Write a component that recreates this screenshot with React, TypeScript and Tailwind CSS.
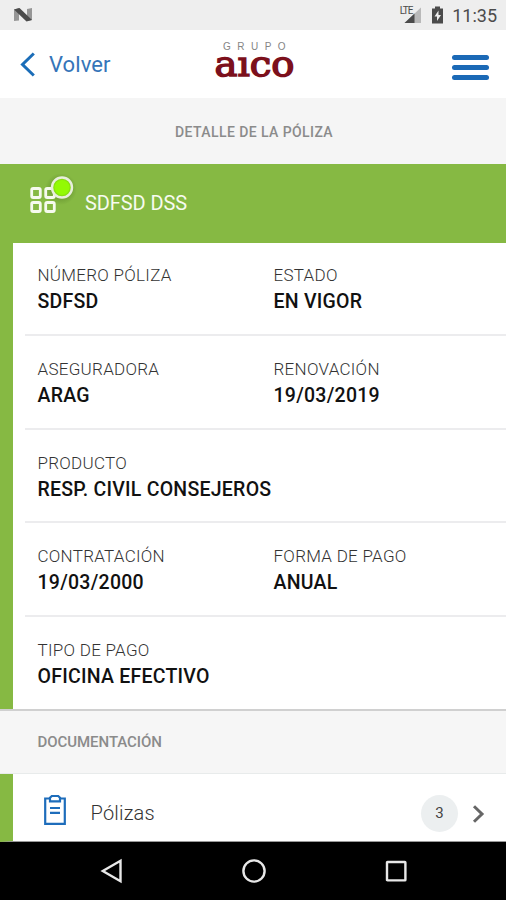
import React from "react";

type FieldData = { label: string; value: string };

const rows: FieldData[][] = [
  [
    { label: "NÚMERO PÓLIZA", value: "SDFSD" },
    { label: "ESTADO", value: "EN VIGOR" },
  ],
  [
    { label: "ASEGURADORA", value: "ARAG" },
    { label: "RENOVACIÓN", value: "19/03/2019" },
  ],
  [{ label: "PRODUCTO", value: "RESP. CIVIL CONSEJEROS" }],
  [
    { label: "CONTRATACIÓN", value: "19/03/2000" },
    { label: "FORMA DE PAGO", value: "ANUAL" },
  ],
  [{ label: "TIPO DE PAGO", value: "OFICINA EFECTIVO" }],
];

function Field({ label, value }: FieldData) {
  return (
    <div className="w-[236px] shrink-0 whitespace-nowrap">
      <div className="text-[17px] leading-[26px] font-light tracking-[0.28px] text-[#333]">{label}</div>
      <div className="text-[19.500px] leading-[28px] font-medium tracking-[0.25px] text-[#111]">{value}</div>
    </div>
  );
}

function StatusBar() {
  return (
    <div className="flex h-[30px] items-center bg-[#eeeeee] pr-[9px] pl-[13px]">
      <svg width="20" height="16" viewBox="0 0 20 16">
        <path d="M1 2.500L6 1v12.500L1 14zM14 2l5-1v12l-5 1z" fill="#969696" />
        <path d="M1 2.500L6.500 1L19 13l-5.500 1.500z" fill="#4b4b4b" />
      </svg>
      <div className="ml-auto flex items-center">
        <div className="relative h-[18px] w-[24px]">
          <svg className="absolute inset-0" width="24" height="18" viewBox="0 0 24 18">
            <path d="M23 1.500V17H6.500z" fill="#b9b9b9" />
            <path d="M16.500 7.500V17H6.500z" fill="#4b4b4b" />
          </svg>
          <span className="absolute top-0 left-[1.500px] text-[10px] leading-[9px] tracking-[-1px] text-[#4b4b4b]">LTE</span>
        </div>
        <svg className="ml-[9px]" width="13" height="18" viewBox="0 0 13 18">
          <path d="M4 0.500h5v2h3v15H1v-15h3z" fill="#4b4b4b" />
          <path d="M7.500 4.500L3.500 10.500H6v4.500l4-6H7.500z" fill="#eee" />
        </svg>
        <span className="mt-[2px] ml-[8px] text-[18px] leading-[20px] text-[#4b4b4b]">11:35</span>
      </div>
    </div>
  );
}

function Header() {
  return (
    <header className="flex h-[68px] items-start justify-between bg-white pr-[17px] pl-[20px]">
      <div className="flex w-[180px] items-center pt-[20px]">
        <svg width="16" height="28" viewBox="0 0 16 28" fill="none" stroke="#1b6db8" strokeWidth="3">
          <path d="M13.800 2.500L2.500 13.500l11.300 11" />
        </svg>
        <span className="mt-[1px] ml-[13px] text-[22px] leading-[28px] tracking-[0.1px] text-[#3575b9]">Volver</span>
      </div>
      <div className="flex w-[108px] flex-col items-center pt-[11px]">
        <span className="pl-[6px] font-['Liberation_Sans',sans-serif] text-[10px] leading-[11px] tracking-[6.500px] text-[#858585]">GRUPO</span>
        <svg className="overflow-visible" width="84" height="32" viewBox="0 0 84 32">
          <text x="1.500" y="23.500" textLength="80" lengthAdjust="spacingAndGlyphs" fontFamily="DejaVu Serif, serif" fontSize="36" fill="#7c101c" stroke="#7c101c" strokeWidth="1.500">aıco</text>
        </svg>
      </div>
      <div className="flex w-[180px] justify-end pt-[24.500px]">
        <div className="flex w-[37px] flex-col gap-[5px]">
          <div className="h-[5px] rounded-full bg-[#1b69b6]" />
          <div className="h-[5px] rounded-full bg-[#1b69b6]" />
          <div className="h-[5px] rounded-full bg-[#1b69b6]" />
        </div>
      </div>
    </header>
  );
}

export default function App() {
  return (
    <div className="flex h-[900px] w-[506px] flex-col overflow-hidden bg-white font-['Roboto',sans-serif]">
      <StatusBar />
      <Header />
      <div className="flex h-[66px] items-center justify-center bg-[#f5f5f5] pt-[2px] pl-[2px] text-[14px] font-medium tracking-[0.42px] text-[#8b8b8b]">
        DETALLE DE LA PÓLIZA
      </div>
      <div className="flex h-[79px] items-start bg-[#86b943] pt-[10px] pl-[27px]">
        <svg width="50" height="42" viewBox="0 0 50 42" fill="none">
          <defs>
            <radialGradient id="shade">
              <stop offset="0.600" stopColor="#5f8a2b" stopOpacity="0.500" />
              <stop offset="1" stopColor="#5f8a2b" stopOpacity="0" />
            </radialGradient>
          </defs>
          <circle cx="34" cy="15" r="16" fill="url(#shade)" />
          <g stroke="#f6faee" strokeWidth="2.800">
            <rect x="4.700" y="14.500" width="8.600" height="9" rx="1.500" />
            <rect x="18.700" y="14.500" width="8.600" height="9" rx="1.500" />
            <rect x="4.700" y="28.500" width="8.600" height="9" rx="1.500" />
            <rect x="18.700" y="28.500" width="8.600" height="9" rx="1.500" />
          </g>
          <circle cx="35" cy="13.500" r="10" fill="#87e010" stroke="#e8eedc" strokeWidth="2.400" />
          <circle cx="35" cy="13.500" r="7.500" fill="#93fa04" />
        </svg>
        <span className="mt-[17px] ml-[8px] text-[20px] leading-[24px] tracking-[-0.1px] text-[#f7fbf0]">SDFSD DSS</span>
      </div>
      <main className="h-[465.500px] border-l-[13px] border-[#86b943] bg-white pl-[12px]">
        {rows.map((fields, i) => (
          <div
            key={i}
            className="flex h-[93.600px] border-b-2 border-[#ececee] pt-[20px] pl-[12.500px] first:h-[93px] first:pt-[19px] last:border-b-0"
          >
            {fields.map((f) => (
              <Field key={f.label} {...f} />
            ))}
          </div>
        ))}
      </main>
      <div className="flex h-[65px] items-center border-t-[2.500px] border-b border-t-[#d0d0d0] border-b-[#e8ebeb] bg-[#f6f6f6] pt-[2px] pl-[37.500px] text-[15px] font-medium tracking-[-0.05px] text-[#8b8b8b]">
        DOCUMENTACIÓN
      </div>
      <div className="flex h-[68.500px] items-center border-b border-l-[13px] border-b-[#999] border-l-[#86b943] bg-white pr-[21px]">
        <svg className="mt-[6px] ml-[30px]" width="24" height="32" viewBox="0 0 24 32" fill="none" stroke="#1e6dbb" strokeWidth="2.200">
          <path d="M6.500 4.500H2.200v25.300h19.600V4.500h-4.300" />
          <path d="M7 7.300V3.800l1.800-1.800h6.400L17 3.800v3.500z" />
          <path d="M7 14h10M7 18.800h10" />
        </svg>
        <span className="mt-[12px] ml-[23.500px] text-[20px] leading-[24px] font-light tracking-[0.2px] text-[#333]">Pólizas</span>
        <div className="mt-[12px] ml-auto flex size-[37px] items-center justify-center rounded-full bg-[#eceff0] text-[15px] text-[#444]">3</div>
        <svg className="mt-[13px] ml-[14px]" width="13" height="20" viewBox="0 0 13 20" fill="none" stroke="#666" strokeWidth="3">
          <path d="M2 2.200L10 10l-8 7.800" />
        </svg>
      </div>
      <nav className="flex h-[58px] items-center bg-black pl-[100px]">
        <svg width="24" height="26" viewBox="0 0 24 26" fill="none" stroke="#e8e8e8" strokeWidth="2.400">
          <path d="M20.500 2.800v20.400L2.800 13z" />
        </svg>
        <svg className="ml-[117px]" width="26" height="26" viewBox="0 0 26 26" fill="none" stroke="#e8e8e8" strokeWidth="2.400">
          <circle cx="13" cy="13" r="10.600" />
        </svg>
        <svg className="ml-[117px]" width="24" height="24" viewBox="0 0 24 24" fill="none" stroke="#e8e8e8" strokeWidth="2.400">
          <rect x="3" y="3" width="18.400" height="18.400" rx="0.500" />
        </svg>
      </nav>
    </div>
  );
}
